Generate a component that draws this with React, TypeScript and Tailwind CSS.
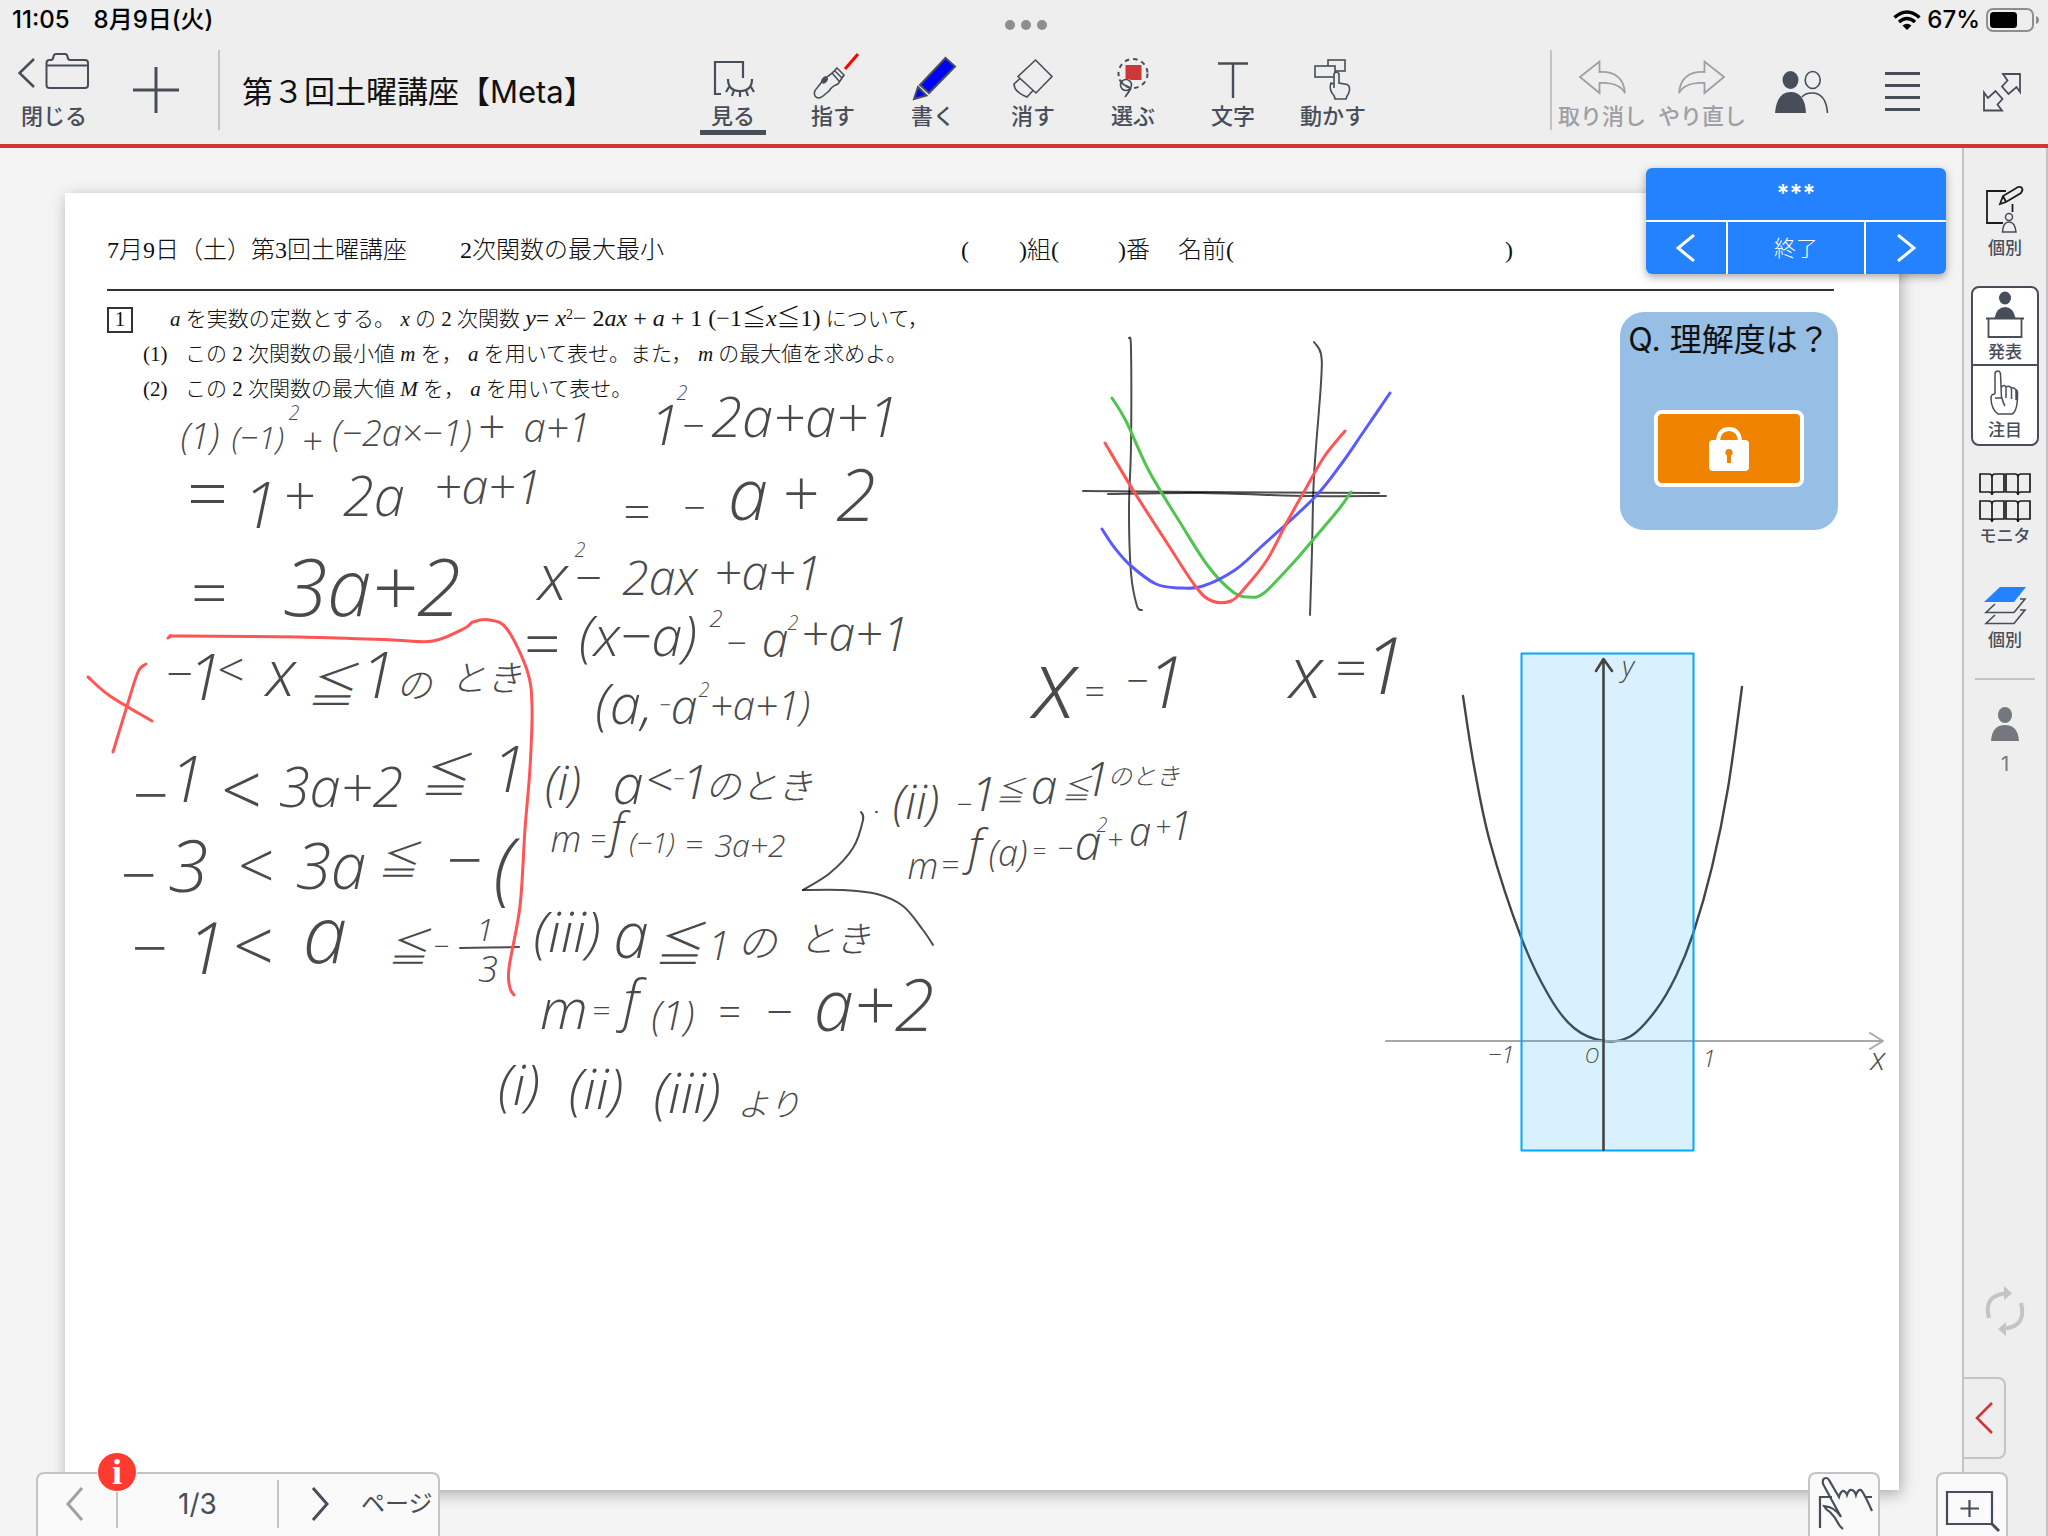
import type { ReactNode } from "react";

type Point = [number, number];
type Note = [text: string, x: number, y: number, size: number];

// Smooth stroke through a list of pen points
function stroke(points: Point[]) {
  let d = `M${points[0][0]} ${points[0][1]}`;
  for (let i = 0; i < points.length - 1; i++) {
    const p0 = points[i - 1] ?? points[i];
    const p1 = points[i];
    const p2 = points[i + 1];
    const p3 = points[i + 2] ?? p2;
    d += `C${p1[0] + (p2[0] - p0[0]) / 6} ${p1[1] + (p2[1] - p0[1]) / 6} ${p2[0] - (p3[0] - p1[0]) / 6} ${p2[1] - (p3[1] - p1[1]) / 6} ${p2[0]} ${p2[1]}`;
  }
  return d;
}

// x is the middle of the text, y its baseline
const notes: Note[] = [
  ["(1)", 200, 449, 36], ["(−1)", 258, 449, 32], ["2", 294, 420, 20], ["+", 312, 454, 36], ["(−2a×−1)", 402, 446, 36], ["+", 491, 444, 48], ["a+1", 557, 442, 40],
  ["1", 260, 528, 64], ["2a", 374, 516, 56], ["+a+1", 488, 504, 48],
  ["3a+2", 372, 616, 80],
  ["1", 205, 700, 64], ["x", 281, 696, 64], ["1", 378, 698, 64], ["の", 414, 698, 36], ["とき", 486, 691, 36],
  ["1", 187, 802, 64], ["3a+2", 341, 807, 56], ["1", 509, 792, 64],
  ["3", 188, 892, 72], ["3a", 331, 889, 64], ["(", 504, 895, 80],
  ["1", 206, 974, 72], ["a", 325, 963, 80], ["1", 485, 941, 32], ["3", 488, 982, 36],

  ["1", 665, 445, 56], ["2", 682, 400, 20], ["2a+a+1", 805, 437, 56],
  ["a", 748, 520, 72], ["2", 856, 521, 72],
  ["x", 553, 600, 64], ["2", 580, 557, 20], ["2ax", 660, 595, 48], ["+a+1", 768, 590, 48],
  ["(x−a)", 638, 656, 56], ["2", 716, 627, 24], ["a", 775, 657, 48], ["2", 793, 630, 20], ["+a+1", 855, 651, 48],
  ["(a,", 624, 724, 56], ["a", 684, 724, 48], ["2", 704, 697, 20], ["+a+1)", 760, 720, 40],
  ["(i)", 563, 800, 48], ["a", 628, 804, 56], ["1", 695, 799, 48], ["のとき", 759, 799, 36],
  ["m", 566, 852, 36], ["f", 617, 847, 48], ["(−1)", 652, 853, 28], ["3a+2", 750, 857, 32],
  ["(iii)", 567, 952, 56], ["a", 631, 958, 64], ["1", 719, 960, 40], ["の", 757, 957, 40], ["とき", 835, 952, 36],
  ["m", 564, 1029, 56], ["f", 631, 1020, 56], ["(1)", 673, 1030, 40], ["a+2", 874, 1031, 72],
  ["(i)", 519, 1105, 56], ["(ii)", 596, 1109, 56], ["(iii)", 687, 1113, 56], ["より", 769, 1116, 32],

  ["x", 1055, 718, 96], ["1", 1166, 708, 72],
  ["x", 1306, 698, 72], ["1", 1385, 694, 80],
  ["(ii)", 916, 819, 48], ["1", 984, 811, 48], ["a", 1044, 804, 48], ["1", 1097, 796, 48], ["のとき", 1144, 785, 24],
  ["m", 923, 879, 36], ["f", 975, 864, 48], ["(a)", 1008, 866, 36], ["a", 1088, 860, 48], ["2", 1102, 832, 20], ["a", 1140, 846, 40], ["1", 1181, 840, 40],
  ["y", 1628, 676, 28], ["x", 1878, 1070, 32], ["−1", 1501, 1063, 24], ["O", 1592, 1063, 20], ["1", 1709, 1067, 24],
];

// y is the middle of the sign
const signs: Note[] = [
  ["=", 206, 494, 72], ["+", 299, 495, 56],
  ["=", 208, 593, 64],
  ["−", 179, 674, 48], ["<", 230, 670, 48], ["≦", 331, 686, 48],
  ["−", 150, 795, 64], ["<", 240, 790, 72], ["≦", 444, 776, 48],
  ["−", 138, 875, 64], ["<", 255, 866, 64], ["≦", 398, 861, 40], ["−", 464, 860, 64],
  ["−", 149, 948, 64], ["<", 252, 946, 72], ["≦", 408, 948, 40], ["−", 441, 946, 28],
  ["−", 693, 426, 40],
  ["=", 636, 512, 48], ["−", 694, 508, 40], ["+", 800, 493, 64],
  ["−", 588, 578, 48],
  ["=", 541, 644, 64], ["−", 736, 643, 36],
  ["−", 665, 705, 20],
  ["<", 659, 780, 48], ["−", 679, 779, 20],
  ["=", 598, 839, 28], ["=", 694, 843, 32],
  ["≦", 678, 945, 48],
  ["=", 601, 1009, 32], ["=", 729, 1012, 40], ["−", 779, 1012, 48],
  ["=", 1094, 692, 36], ["−", 1137, 681, 40], ["=", 1350, 668, 56],
  ["−", 964, 804, 28], ["≦", 1010, 791, 28], ["≦", 1076, 789, 28],
  ["=", 950, 863, 32], ["=", 1039, 851, 24], ["−", 1065, 848, 28], ["+", 1115, 839, 28], ["+", 1163, 826, 28],
];

const blackPen: Point[][] = [
  [[1129, 338], [1131, 349], [1131, 446], [1129, 509], [1131, 573], [1137, 606], [1142, 610]],
  [[1314, 342], [1321, 354], [1321, 383], [1314, 476], [1312, 551], [1310, 615]],
  [[1083, 491], [1200, 492], [1379, 493]],
  [[1108, 494], [1200, 493], [1310, 496], [1386, 496]],
  [[861, 812], [863, 820], [853, 848], [830, 873], [803, 890]],
  [[803, 890], [843, 890], [877, 894], [903, 906], [923, 930], [933, 945]],
  [[460, 948], [519, 947]],
  [[876, 812], [877, 812]],
];

const redPen: Point[][] = [
  [[168, 638], [172, 636], [182, 636], [300, 637], [393, 640], [433, 641], [465, 628], [473, 622], [490, 620], [507, 629], [527, 670], [532, 706], [530, 768], [525, 829], [520, 906], [509, 968], [510, 988], [514, 995]],
  [[88, 677], [110, 696], [152, 721]],
  [[146, 664], [138, 672], [127, 706], [113, 752]],
  [[1105, 443], [1133, 490], [1167, 543], [1196, 587], [1212, 601], [1231, 601], [1244, 589], [1267, 560], [1287, 522], [1305, 490], [1324, 457], [1345, 431]],
];

const greenPen: Point[] = [[1112, 398], [1126, 421], [1149, 471], [1181, 524], [1208, 566], [1233, 592], [1249, 597], [1264, 593], [1294, 562], [1312, 541], [1339, 509], [1351, 492]];
const bluePen: Point[] = [[1102, 529], [1114, 547], [1130, 565], [1156, 584], [1180, 588], [1203, 586], [1235, 570], [1262, 546], [1314, 498], [1342, 463], [1362, 434], [1390, 393]];
const parabola: Point[] = [[1463, 696], [1474, 766], [1490, 842], [1521, 937], [1549, 996], [1574, 1028], [1604, 1041], [1631, 1036], [1656, 1010], [1676, 976], [1693, 934], [1712, 867], [1728, 788], [1742, 687]];

function Ink() {
  return (
    <svg viewBox="65 193 1834 1297" className="absolute inset-0 size-full" fill="none" strokeLinecap="round" strokeLinejoin="round">
      <path d={stroke(parabola)} stroke="#444" strokeWidth="2.4" />
      <path d="M1386 1041H1882M1870 1033L1883 1041L1870 1049" stroke="#a8a8a8" strokeWidth="2" />
      <rect x="1521.5" y="653.5" width="172" height="497" fill="#00a0ff" fillOpacity=".15" stroke="#00a8ff" strokeWidth="2" />
      <path d="M1603.5 1150V660M1596 671L1603.5 659L1612 671" stroke="#444" strokeWidth="2.6" />
      <g stroke="#000" strokeOpacity=".7" strokeWidth="2">
        {blackPen.map((p, i) => (
          <path key={i} d={stroke(p)} />
        ))}
      </g>
      <path d={stroke(greenPen)} stroke="#4fc44f" strokeWidth="3" />
      <path d={stroke(bluePen)} stroke="#5a5aff" strokeWidth="3" />
      <g stroke="#ff5555" strokeWidth="3">
        {redPen.map((p, i) => (
          <path key={i} d={stroke(p)} />
        ))}
      </g>
      <g className="fill-[#4a4a4a] font-['Open_Sans','Noto_Sans_CJK_JP',sans-serif] font-light italic" textAnchor="middle">
        {notes.map(([text, x, y, size], i) => (
          <text key={i} x={x} y={y} fontSize={size}>
            {text}
          </text>
        ))}
        {signs.map(([text, x, y, size], i) => (
          <text key={i} x={x} y={y + Math.round(size * 0.36)} fontSize={size}>
            {text}
          </text>
        ))}
      </g>
    </svg>
  );
}

function Tool({ label, active, children }: { label: string; active?: boolean; children: ReactNode }) {
  return (
    <button type="button" className="flex w-[100px] shrink-0 flex-col items-center text-[22px] leading-6 font-medium">
      <svg viewBox="0 0 56 52" className="h-[52px] w-14" fill="none" stroke="currentColor" strokeWidth="2">
        {children}
      </svg>
      <span className={active ? "mt-0.5 border-b-[5px] border-[#474e59] px-[11px] pb-0.5" : "mt-0.5"}>{label}</span>
    </button>
  );
}

function StatusBar() {
  return (
    <div className="flex h-10 items-center justify-between px-2 text-2xl font-medium text-black">
      <div className="flex flex-1 gap-6 pl-1">
        <span>11:05</span>
        <span>8月9日(火)</span>
      </div>
      <div className="flex gap-1.5 pt-2.5">
        <i className="size-2.5 rounded-full bg-[#8e8e8e]" />
        <i className="size-2.5 rounded-full bg-[#8e8e8e]" />
        <i className="size-2.5 rounded-full bg-[#8e8e8e]" />
      </div>
      <div className="flex flex-1 items-center justify-end gap-1.5">
        <svg viewBox="0 0 28 20" className="h-5 w-7" fill="none" stroke="#000" strokeWidth="3.6">
          <path d="M1.5 7.5Q14-3.500 26.500 7.500M6 12Q14 5 22 12" />
          <path d="M9.500 15.500Q14 12 18.500 15.500L14 20Z" fill="#000" stroke="none" />
        </svg>
        <span>67%</span>
        <svg viewBox="0 0 54 24" className="h-6 w-[54px]">
          <rect x="1" y="1" width="46" height="22" rx="6" fill="none" stroke="#8e8e8e" strokeWidth="2" />
          <rect x="4" y="4" width="27" height="16" rx="3.500" />
          <path d="M50 8Q53 9 53 12Q53 15 50 16Z" fill="#8e8e8e" />
        </svg>
      </div>
    </div>
  );
}

function Header() {
  return (
    <header className="h-[148px] border-b-4 border-[#cd3737] bg-[#eee] text-[#474e59]">
      <StatusBar />
      <div className="flex items-start pt-2.5">
        <div className="flex w-[683px] shrink-0">
          <button type="button" className="flex w-[108px] flex-col items-center text-[22px] leading-6 font-medium">
            <svg viewBox="0 0 72 52" className="h-[52px] w-[72px]" fill="none" stroke="currentColor" strokeWidth="2">
              <path d="M16 9L1.500 23L16 37" strokeWidth="2.600" />
              <path d="M28.500 35V13Q28.500 10 31.500 10H33Q35 10 35.500 6.500Q36 4 38 4H47Q49 4 49.500 6.500Q50 10 52 10H67Q70 10 70 13V35Q70 38 67 38H31.500Q28.500 38 28.500 35ZM28.500 15.500H70" />
            </svg>
            <span className="mt-0.5">閉じる</span>
          </button>
          <button type="button" aria-label="追加" className="flex h-20 w-[95px] items-center justify-center">
            <svg viewBox="0 0 46 46" className="size-[46px]" stroke="currentColor" strokeWidth="3">
              <path d="M0 23H46M23 0V46" />
            </svg>
          </button>
          <div className="ml-[15px] h-20 w-0.5 bg-[#c4c4c4]" />
          <h1 className="ml-[22px] flex h-20 items-center pt-1 text-[31px] leading-10 font-normal whitespace-nowrap text-[#111]">第３回土曜講座【Meta】</h1>
        </div>
        <nav className="flex">
          <Tool label="見る" active>
            <path d="M16 44H10V12H38V28M23 29Q23 41 35 41Q47 41 47 29M24 37L21 42M29 40L27 46M35 41V47M41 40L43 46M46 37L49 42" strokeWidth="2.200" />
          </Tool>
          <Tool label="指す">
            <path d="M53 4L40 19" stroke="#f00" strokeWidth="3" />
            <path d="M32 18L39 25L33 34Q27 36 24 41L18 46Q13 50 10 46Q8 42 12 38L20 28Q26 25 32 18ZM27 23L34 31M29.500 20.500L37 28" strokeWidth="1.600" />
            <ellipse cx="19.500" cy="30" rx="3" ry="1.800" transform="rotate(-50 19.500 30)" fill="currentColor" />
          </Tool>
          <Tool label="書く">
            <path d="M40.500 8L50 16.500L24 43L15 35ZM13 37L21.500 45.500L9 49Z" fill="#00f" />
          </Tool>
          <Tool label="消す">
            <path d="M30.500 10L47 26.500L31 43L13 26.500ZM15 28.500L9 34Q9 42 22 47L28 40.500" strokeWidth="1.600" />
          </Tool>
          <Tool label="選ぶ">
            <circle cx="28" cy="23.500" r="14.500" strokeDasharray="4.500 4" />
            <path d="M20.500 15H36.500V30H26Q22 28 20.500 30Z" fill="#cd3737" stroke="none" />
            <circle cx="21" cy="35" r="5.500" strokeWidth="1.600" />
            <path d="M14.500 29.500Q17 35 24 37M26 38Q24 42 20 47" strokeWidth="1.800" />
          </Tool>
          <Tool label="文字">
            <path d="M13 13.500H43M28 13V48" strokeWidth="2.400" />
          </Tool>
          <Tool label="動かす">
            <rect x="23" y="10" width="17" height="11" strokeWidth="1.600" />
            <rect x="10" y="16" width="20" height="11" fill="#eee" strokeWidth="1.600" />
            <path d="M29 38V24Q31.500 20 34 24V33L42 34.500Q45 36 44.500 40Q44 44 42 46L41 49H30Q30 46 27 43Q24 38 26 33L29 34" fill="#eee" strokeWidth="1.600" />
          </Tool>
        </nav>
        <div className="ml-auto flex border-l-2 border-[#c4c4c4]">
          <div className="flex text-[#9da0a5]">
            <Tool label="取り消し">
              <path d="M6 27L25.500 11.500V22Q49 21 51 43Q45 32 25.500 33V43Z" strokeWidth="1.800" />
            </Tool>
            <Tool label="やり直し">
              <path d="M50 27L30.500 11.500V22Q7 21 5 43Q11 32 30.500 33V43Z" strokeWidth="1.800" />
            </Tool>
          </div>
          <button type="button" aria-label="参加者" className="flex h-20 w-[100px] items-center justify-center pt-1">
            <svg viewBox="0 0 56 52" className="h-[52px] w-14" fill="none" stroke="currentColor" strokeWidth="1.600">
              <ellipse cx="16.500" cy="14" rx="8" ry="9" fill="currentColor" stroke="none" />
              <path d="M1 47Q3 26 16.500 26Q31 26 32 47Z" fill="currentColor" stroke="none" />
              <ellipse cx="38.700" cy="14" rx="7.500" ry="8.500" />
              <path d="M28 31Q31 27 38 27Q52 27 53.500 47" />
            </svg>
          </button>
          <button type="button" aria-label="メニュー" className="flex h-20 w-[100px] flex-col items-center justify-center gap-[9px] pt-0.5">
            <i className="h-[3px] w-[35px] bg-[#474e59]" />
            <i className="h-[3px] w-[35px] bg-[#474e59]" />
            <i className="h-[3px] w-[35px] bg-[#474e59]" />
            <i className="h-[3px] w-[35px] bg-[#474e59]" />
          </button>
          <button type="button" aria-label="全画面" className="flex h-20 w-24 items-center justify-center pt-1 pl-1">
            <svg viewBox="0 0 40 40" className="size-10" fill="none" stroke="currentColor" strokeWidth="1.800">
              <path d="M21 2H38V20L34.500 15L26.500 22L20 14.500L25.500 8.500ZM2 20.500L6 26L13.500 19L20.500 27L15.500 32.500L20 38.500H2Z" />
            </svg>
          </button>
        </div>
      </div>
    </header>
  );
}

function Worksheet() {
  return (
    <article className="relative aspect-[1834/1297] bg-white px-[42px] pt-10 font-['Liberation_Serif','Noto_Sans_CJK_JP',serif] font-light text-[#111] shadow-[2px_4px_14px_rgba(0,0,0,0.3)]">
      <div className="flex h-[34px] items-center text-2xl whitespace-pre">
        <span className="w-[353px]">7月9日（土）第3回土曜講座</span>
        <span className="w-[501px]">2次関数の最大最小</span>
        <span className="w-[58px]">(</span>
        <span className="w-[99px]">)組(</span>
        <span className="w-[60px]">)番</span>
        <span className="w-[327px]">名前(</span>
        <span>)</span>
      </div>
      <div className="mt-[22px] mr-[23px] h-0.5 bg-[#333]" />
      <div className="mt-[11px] text-[21px] leading-[35px] whitespace-pre">
        <div className="flex items-center">
          <span className="mr-[37px] grid h-[26px] w-[26px] place-items-center border-2 border-[#333] leading-none">1</span>
          <p>
            <i>a</i> を実数の定数とする。 <i>x</i> の 2 次関数{" "}
            <span className="text-2xl leading-8">
              <i>y</i>= <i>x</i>
              <sup className="text-sm leading-none">2</sup>− 2<i>ax</i> + <i>a</i> + 1 (−1≦<i>x</i>≦1)
            </span>{" "}
            について，
          </p>
        </div>
        <p className="flex pl-9">
          <span className="w-[42px]">(1)</span>
          <span>
            この 2 次関数の最小値 <i>m</i> を， <i>a</i> を用いて表せ。また， <i>m</i> の最大値を求めよ。
          </span>
        </p>
        <p className="flex pl-9">
          <span className="w-[42px]">(2)</span>
          <span>
            この 2 次関数の最大値 <i>M</i> を， <i>a</i> を用いて表せ。
          </span>
        </p>
      </div>
      <Ink />
      <section className="absolute top-[119px] right-[61px] flex size-[218px] flex-col items-center rounded-3xl bg-[#97bfe6] pt-2 font-['Inter','Noto_Sans_CJK_JP',sans-serif]">
        <h2 className="text-[32px] leading-10 font-normal whitespace-nowrap">Q. 理解度は？</h2>
        <button type="button" aria-label="ロック中" className="mt-[50px] flex h-[77px] w-[150px] items-center justify-center rounded-lg border-4 border-white bg-[#f08300]">
          <svg viewBox="0 0 42 44" className="h-11 w-[42px]">
            <path d="M10 14Q11 2 21 2Q31 2 32 14" fill="none" stroke="#fff" strokeWidth="4" />
            <rect x="1" y="13" width="40" height="31" rx="4" fill="#fff" />
            <path d="M21 22a3.500 3.500 0 0 1 2 6.500V36H19V28.500A3.500 3.500 0 0 1 21 22Z" fill="#f08300" />
          </svg>
        </button>
      </section>
    </article>
  );
}

function Presenter() {
  return (
    <section className="absolute top-5 right-4 w-[300px] overflow-hidden rounded-md bg-white text-white shadow-[0_3px_8px_rgba(0,0,0,0.35)]">
      <div className="h-[52px] bg-[#2482ff] pt-2 text-center text-2xl leading-9 font-semibold">***</div>
      <div className="mt-0.5 flex h-[52px] gap-0.5 text-[22px] font-light">
        <button type="button" aria-label="前へ" className="grid w-20 place-items-center bg-[#2482ff]">
          <svg viewBox="0 0 20 28" className="h-7 w-5" fill="none" stroke="currentColor" strokeWidth="3">
            <path d="M18 1L2 14L18 27" />
          </svg>
        </button>
        <button type="button" className="flex-1 bg-[#2482ff]">終了</button>
        <button type="button" aria-label="次へ" className="grid w-20 place-items-center bg-[#2482ff]">
          <svg viewBox="0 0 20 28" className="h-7 w-5" fill="none" stroke="currentColor" strokeWidth="3">
            <path d="M2 1L18 14L2 27" />
          </svg>
        </button>
      </div>
    </section>
  );
}

function Sidebar() {
  return (
    <aside className="flex w-[86px] shrink-0 flex-col items-center border-x-2 border-[#c4c4c4] bg-[#eee] text-[17px] leading-6 font-medium text-[#474e59]">
      <button type="button" className="mt-9 flex flex-col items-center">
        <svg viewBox="0 0 40 50" className="h-[50px] w-10" fill="none" stroke="#1c1c1c" strokeWidth="1.800">
          <path d="M21 7H2V39H18M27.500 20V28" />
          <path d="M15 20L18 12L33 3Q37 2 37.500 6L36 9L21 18ZM18 12L21 18" />
          <circle cx="24" cy="33" r="3.500" stroke="#474e59" strokeWidth="1.500" />
          <path d="M17.500 48Q18 38 24 38Q30 38 31 48Z" stroke="#474e59" strokeWidth="1.500" />
        </svg>
        <span className="mt-0.5">個別</span>
      </button>
      <div className="mt-[26px] flex w-[68px] flex-col divide-y-2 divide-[#474e59] rounded-lg border-2 border-[#474e59] bg-white">
        <button type="button" className="flex h-[78px] flex-col items-center">
          <svg viewBox="0 0 40 50" className="h-[52px] w-10" fill="none" stroke="currentColor" strokeWidth="1.800">
            <ellipse cx="20" cy="9" rx="6" ry="6.500" fill="currentColor" stroke="none" />
            <path d="M9.500 29Q12 18 20 18Q28 18 30.500 29Z" fill="currentColor" stroke="none" />
            <path d="M1 29.500H39M3.500 30V48H36.500V30" />
          </svg>
          <span>発表</span>
        </button>
        <button type="button" className="flex h-[78px] flex-col items-center">
          <svg viewBox="0 0 40 50" className="h-[52px] w-10" fill="none" stroke="currentColor" strokeWidth="1.500">
            <path d="M10 27V7Q10 4 13 4Q15 4 15.500 7L16.500 31M16.500 20Q19 17 21 20V31M21 20Q24 18 26.500 21V32M26.500 21Q29 20 31 23V33M10 27Q6 27 6 31Q6 42 13 47H27Q33 44 32.500 25Q32 22 30 23M10 31H17Q18 36 20 39" />
          </svg>
          <span>注目</span>
        </button>
      </div>
      <button type="button" className="mt-6 flex flex-col items-center">
        <svg viewBox="0 0 54 54" className="size-[54px]" fill="none" stroke="#1c1c1c" strokeWidth="1.700">
          <path d="M2 4H11Q14 4 14 7Q14 4 17 4H26V22H17Q14 22 14 25Q14 22 11 22H2ZM14 6V23M28 4H37Q40 4 40 7Q40 4 43 4H52V22H43Q40 22 40 25Q40 22 37 22H28ZM40 6V23" />
          <path d="M2 31H11Q14 31 14 34Q14 31 17 31H26V49H17Q14 49 14 52Q14 49 11 49H2ZM14 33V50M28 31H37Q40 31 40 34Q40 31 43 31H52V49H43Q40 49 40 52Q40 49 37 49H28ZM40 33V50" />
        </svg>
        <span>モニタ</span>
      </button>
      <button type="button" className="mt-9 flex flex-col items-center">
        <svg viewBox="0 0 44 42" className="h-[42px] w-11" fill="none" stroke="currentColor" strokeWidth="1.600">
          <path d="M17 3H43L31 18H1Z" fill="#2482ff" stroke="none" />
          <path d="M12 20L3 28.500H31L42 15H37M12 31L3 39.500H31L42 26H37" />
        </svg>
        <span className="mt-0.5">個別</span>
      </button>
      <hr className="mt-[26px] w-[60px] border-t-2 border-[#c4c4c4]" />
      <div className="mt-[26px] flex flex-col items-center text-xl font-normal text-[#74777d]">
        <svg viewBox="0 0 28 36" className="h-9 w-7" fill="currentColor">
          <ellipse cx="14" cy="9" rx="7" ry="8" />
          <path d="M0 35Q1 19 14 19Q27 19 28 35Z" />
        </svg>
        <span className="mt-2">1</span>
      </div>
      <svg viewBox="0 0 40 52" className="mt-auto h-[52px] w-10" fill="none" stroke="#c4c4c4" strokeWidth="4">
        <path d="M4 33Q-2 11 20 8.500M36 18Q42 41 20 43.500" />
        <path d="M19 1L27 8.500L19 15ZM21 37V51L13 44Z" fill="#c4c4c4" stroke="none" />
      </svg>
      <button type="button" aria-label="パネルを開く" className="mt-10 mb-[77px] grid h-[82px] w-[42px] place-items-center self-start rounded-r-lg border-2 border-l-0 border-[#c4c4c4]">
        <svg viewBox="0 0 18 32" className="h-8 w-[18px]" fill="none" stroke="#cd3737" strokeWidth="2.600">
          <path d="M17 1L2 16L17 31" />
        </svg>
      </button>
    </aside>
  );
}

function Pager() {
  return (
    <nav className="absolute bottom-0 left-9 flex h-16 w-[404px] items-start rounded-t-lg border-2 border-b-0 border-[#c4c4c4] bg-[#fafafa] pt-1.5 text-[#474e59]">
      <button type="button" aria-label="前のページ" className="grid h-12 w-[78px] place-items-center pr-1 text-[#9da0a5]">
        <svg viewBox="0 0 18 34" className="h-[34px] w-[18px]" fill="none" stroke="currentColor" strokeWidth="3">
          <path d="M16 1L2 17L16 33" />
        </svg>
      </button>
      <span className="h-12 flex-1 border-x-2 border-[#c4c4c4] text-center text-[28px] leading-[48px]">1/3</span>
      <button type="button" className="flex h-12 w-[159px] items-center gap-8 pl-8 text-2xl whitespace-nowrap">
        <svg viewBox="0 0 18 34" className="h-[34px] w-[18px] shrink-0" fill="none" stroke="currentColor" strokeWidth="3">
          <path d="M2 1L16 17L2 33" />
        </svg>
        <span>ページ</span>
      </button>
      <span className="absolute -top-[22px] left-[59px] grid size-10 place-items-center rounded-full border border-white bg-[#ff3b30] font-['Liberation_Serif',serif] text-[36px] leading-none font-bold text-white">i</span>
    </nav>
  );
}

export default function App() {
  return (
    <div className="relative flex min-h-screen flex-col overflow-hidden bg-[#f4f4f4] font-['Inter','Noto_Sans_CJK_JP',sans-serif]">
      <Header />
      <div className="flex flex-1">
        <main className="relative min-w-0 flex-1 pt-[45px] pr-[63px] pl-[65px]">
          <Worksheet />
          <Presenter />
        </main>
        <Sidebar />
      </div>
      <Pager />
      <button type="button" aria-label="手書き" className="absolute right-[168px] bottom-0 flex h-16 w-[72px] justify-center rounded-t-lg border-2 border-b-0 border-[#c4c4c4] bg-[#fafafa] text-[#474e59]">
        <svg viewBox="0 0 68 62" className="h-[62px] w-[68px]" fill="none" stroke="currentColor" strokeWidth="2.200">
          <path d="M10 54V23H22M55 23H62M31 43L13 10Q12 4 16 4Q18 4 19 6L29 23Q31 16 34 17Q36 18 37 21Q39 15 42 16Q45 17 46 21Q48 15 51 16Q54 19 62 37M31 43Q25 33 14 32Q16 36 20 38Q25 43 28 49Q30 53 33 55" />
        </svg>
      </button>
      <button type="button" aria-label="拡大" className="absolute right-10 bottom-0 flex h-16 w-[72px] justify-center rounded-t-lg border-2 border-b-0 border-[#c4c4c4] bg-[#fafafa] text-[#474e59]">
        <svg viewBox="0 0 68 62" className="h-[62px] w-[68px]" fill="none" stroke="currentColor" strokeWidth="2.200">
          <path d="M9 18H54V50H9ZM31.500 26V43M22.500 34.500H41" />
          <path d="M54 50L61 57" strokeWidth="3" />
        </svg>
      </button>
    </div>
  );
}
